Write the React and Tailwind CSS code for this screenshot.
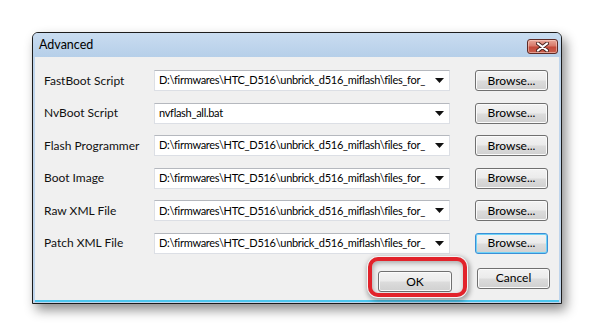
import React from 'react';

const rows = [
  { label: 'FastBoot Script', value: 'D:\\firmwares\\HTC_D516\\unbrick_d516_miflash\\files_for_' },
  { label: 'NvBoot Script', value: 'nvflash_all.bat' },
  { label: 'Flash Programmer', value: 'D:\\firmwares\\HTC_D516\\unbrick_d516_miflash\\files_for_' },
  { label: 'Boot Image', value: 'D:\\firmwares\\HTC_D516\\unbrick_d516_miflash\\files_for_' },
  { label: 'Raw XML File', value: 'D:\\firmwares\\HTC_D516\\unbrick_d516_miflash\\files_for_' },
  { label: 'Patch XML File', value: 'D:\\firmwares\\HTC_D516\\unbrick_d516_miflash\\files_for_', focused: true },
];

function WinButton({ children, focused, className = '' }) {
  return (
    <button
      className={`h-[21px] rounded-[3px] border text-[12px] leading-none text-black ${
        focused
          ? 'border-[#3b8fd6] shadow-[inset_0_0_0_1px_#6fd3f7]'
          : 'border-[#707070] shadow-[inset_0_0_0_1px_#fbfbfb]'
      } bg-[linear-gradient(to_bottom,#f3f3f3_0%,#ebebeb_48%,#dcdcdc_52%,#d0d0d0_100%)] ${className}`}
    >
      {children}
    </button>
  );
}

function ComboBox({ value }) {
  return (
    <div className="w-[296px] h-[21px] bg-white border border-[#dcdfe5] border-t-[#b5b8be] flex items-center pl-[4px] pr-[5px]">
      <span className="flex-1 overflow-hidden whitespace-nowrap text-[11px] tracking-[-0.3px] text-black">{value}</span>
      <svg width="9" height="5" viewBox="0 0 9 5" className="ml-[3px] shrink-0">
        <path d="M0 0h9L4.5 5z" fill="#111" />
      </svg>
    </div>
  );
}

export default function App() {
  return (
    <div
      className="w-[595px] h-[336px] bg-white pt-[32px] pl-[32px]"
      style={{ fontFamily: 'Lato, "Noto Sans", sans-serif' }}
    >
      <div className="w-[530px] h-[272px] border border-[#1c1c1c] rounded-t-[6px] bg-[#bfd5ec] shadow-[4px_6px_12px_rgba(0,0,0,0.45)] flex flex-col overflow-hidden">
        {/* title bar */}
        <div className="h-[24px] shrink-0 flex items-center justify-between pl-[6px] pr-[3px] bg-[linear-gradient(to_bottom,#c9dcf0,#b6cfe9)]">
          <span className="text-[12.5px] text-black leading-none">Advanced</span>
          <div className="w-[31px] h-[15px] mt-[3px] rounded-[3px] border border-[#5e2a25] bg-[linear-gradient(to_bottom,#e9a89a_0%,#d7796a_45%,#c44a3a_55%,#c85e4d_100%)] flex items-center justify-center shadow-[inset_0_0_0_1px_rgba(255,220,210,0.5)]">
            <svg width="13" height="10" viewBox="0 0 13 10">
              <path d="M2 1.5L11 8.5M11 1.5L2 8.5" stroke="#4a2420" strokeWidth="4" strokeLinecap="round" />
              <path d="M2 1.5L11 8.5M11 1.5L2 8.5" stroke="#fff" strokeWidth="2.2" strokeLinecap="round" />
            </svg>
          </div>
        </div>
        {/* client area */}
        <div className="flex-1 mx-[2px] mb-[1px] bg-[#f0f0f0] border-b-[2px] border-b-[#4cc6ee] flex flex-col pl-[9px] pt-[13px]">
          <div className="flex flex-col gap-[11.6px]">
            {rows.map((r) => (
              <div key={r.label} className="flex items-center h-[21px]">
                <span className="w-[110px] text-[12px] text-[#111]">{r.label}</span>
                <ComboBox value={r.value} />
                <WinButton focused={r.focused} className="ml-[25px] w-[73px]">Browse...</WinButton>
              </div>
            ))}
          </div>
          <div className="flex justify-end mt-[14px] pr-[9px]">
            <div className="relative">
              <WinButton className="w-[74px]">OK</WinButton>
              <div className="absolute left-[-10px] top-[-11px] w-[99px] h-[40px] rounded-[10px] border-[4px] border-[#e2232b] shadow-[0_0_0_1px_#f5f5f5,1px_2px_5px_2px_rgba(0,0,0,0.35),inset_1px_2px_5px_rgba(0,0,0,0.3)] pointer-events-none" />
            </div>
            <WinButton className="ml-[25px] w-[73px]">Cancel</WinButton>
          </div>
        </div>
      </div>
    </div>
  );
}
